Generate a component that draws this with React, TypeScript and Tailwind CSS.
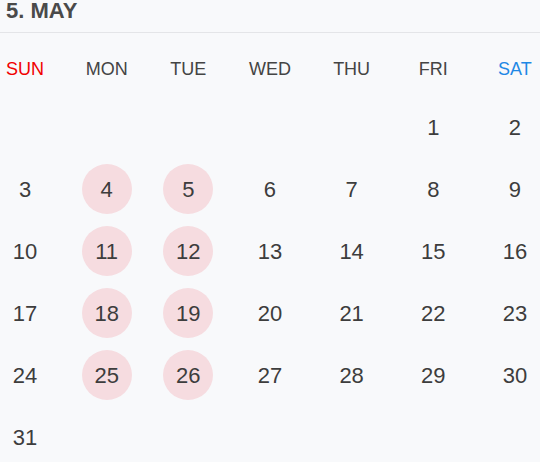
import React from 'react';

const DAYS = ['SUN', 'MON', 'TUE', 'WED', 'THU', 'FRI', 'SAT'];
const HIGHLIGHT = [4, 5, 11, 12, 18, 19, 25, 26];

const weeks: (number | null)[][] = [];
let week: (number | null)[] = [null, null, null, null, null];
for (let d = 1; d <= 31; d++) {
    week.push(d);
    if (week.length === 7) {
        weeks.push(week);
        week = [];
    }
}
if (week.length) {
    while (week.length < 7) week.push(null);
    weeks.push(week);
}

const dayColor = (i: number) =>
    i === 0 ? 'text-[#f10000]' : i === 6 ? 'text-[#1e88e5]' : 'text-[#444444]';

const App: React.FC = () => {
    return (
        <div className="w-[540px] h-[462px] overflow-hidden bg-[#f8f9fb] font-['Liberation_Sans',Arial,sans-serif]">
            <div className="h-[33px] border-b border-[#e4e5e8] pl-[6px]">
                <h1 className="text-[22px] leading-[22px] font-bold text-[#4a4a4a]">5. MAY</h1>
            </div>

            <div className="mt-[24px] flex justify-between h-[24px] items-center">
                {DAYS.map((d, i) => (
                    <div key={d} className={`w-[50px] text-center text-[18px] ${dayColor(i)}`}>
                        {d}
                    </div>
                ))}
            </div>

            <div className="mt-[21px] flex flex-col gap-[12px]">
                {weeks.map((w, wi) => (
                    <div key={wi} className="flex justify-between">
                        {w.map((d, i) => (
                            <div
                                key={i}
                                className={`w-[50px] h-[50px] rounded-full flex items-center justify-center text-[22px] text-[#3d3d3d] ${
                                    d && HIGHLIGHT.includes(d) ? 'bg-[#f6dce0]' : ''
                                }`}
                            >
                                {d ?? ''}
                            </div>
                        ))}
                    </div>
                ))}
            </div>
        </div>
    );
};

export default App;
